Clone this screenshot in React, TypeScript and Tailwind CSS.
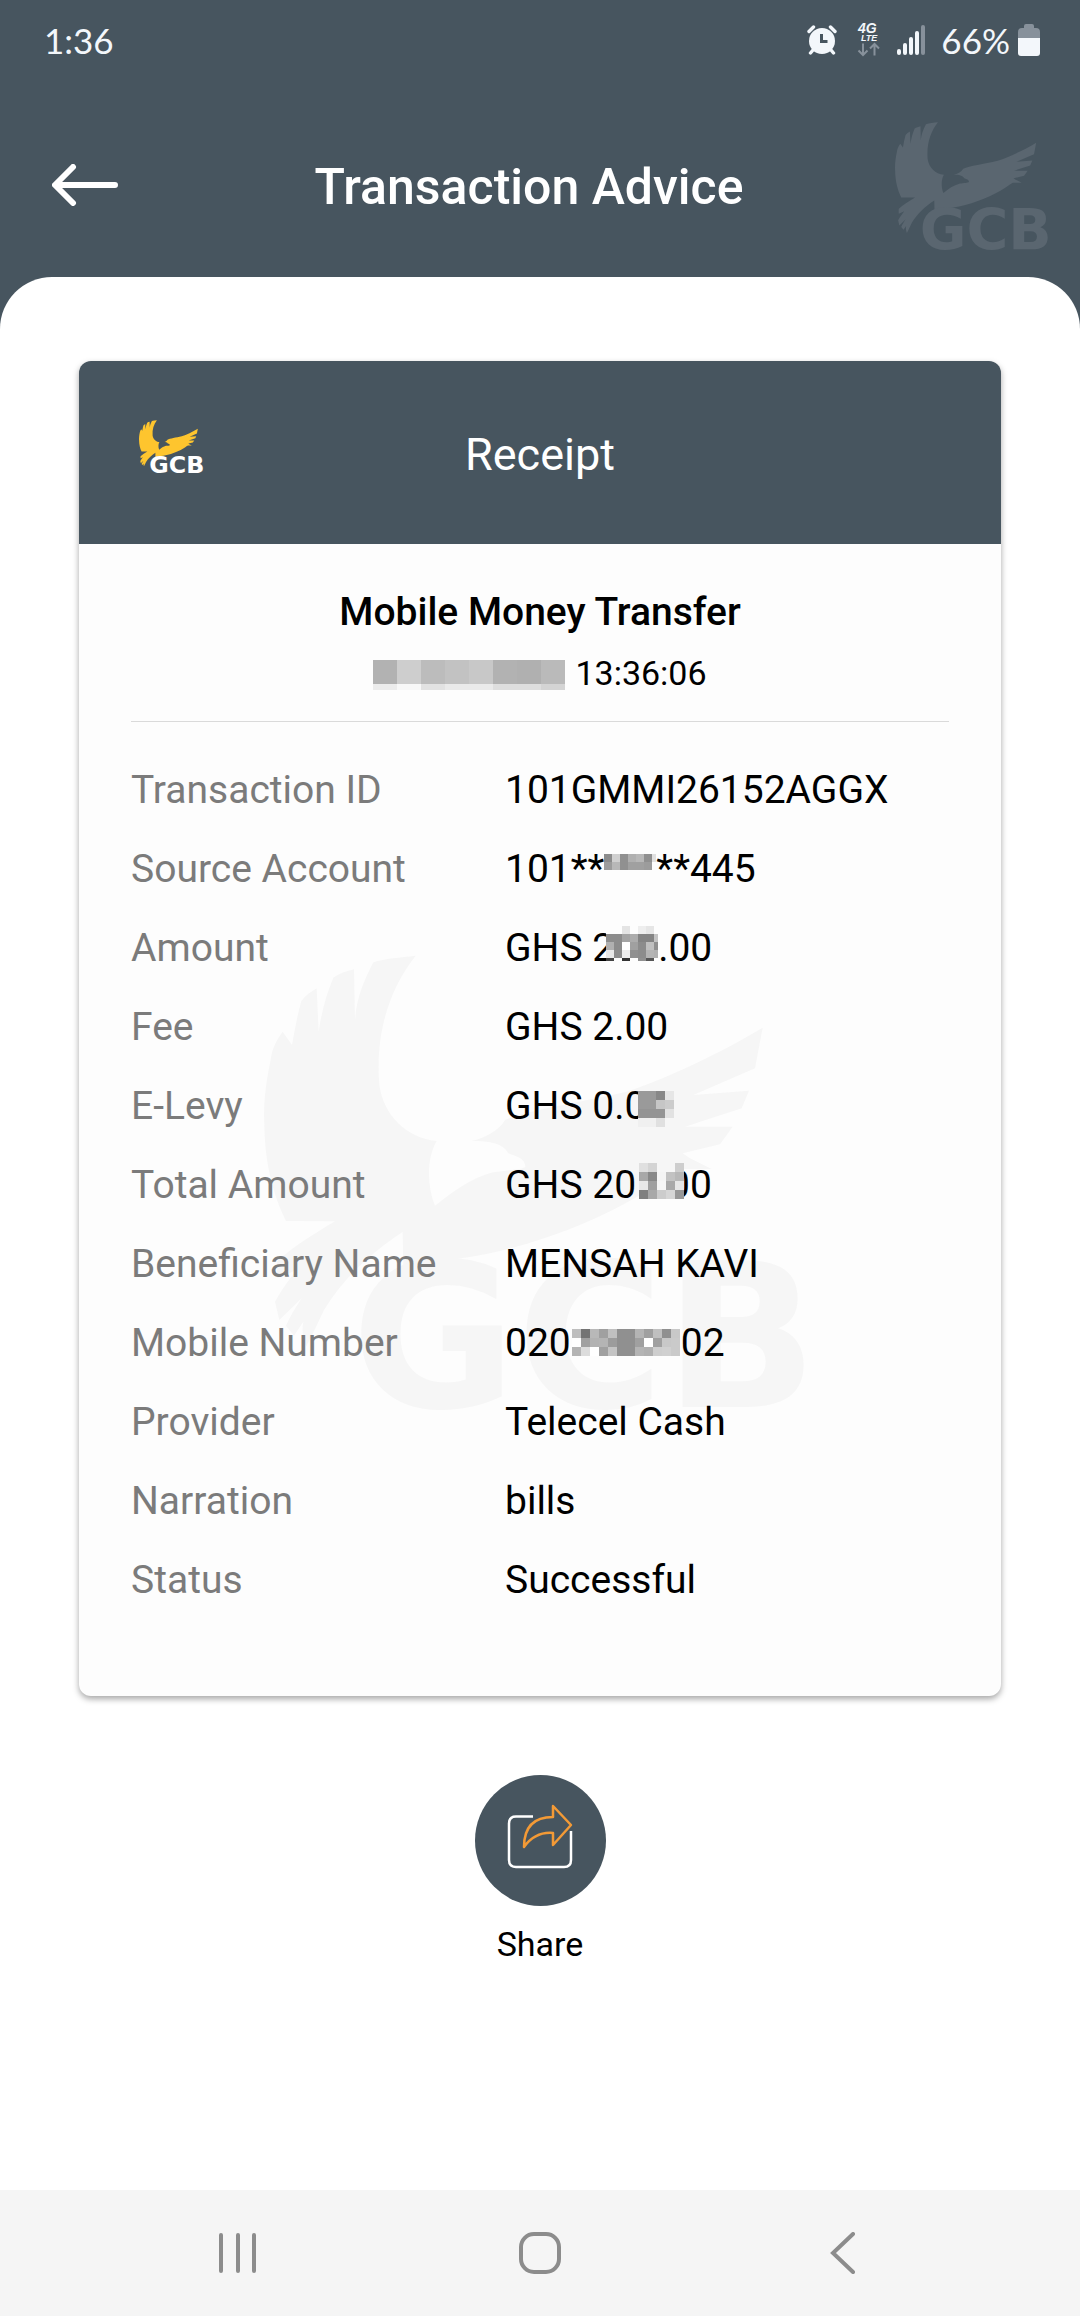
import { ReactNode } from 'react';

const DATE_MASK = [
  ['#b2b2b2', '#cecece', '#bcbcbc', '#c2c2c2', '#c8c8c8', '#b2b2b2', '#b0b0b0', '#bababa'],
  ['#ececec', '#f8f8f8', '#e2e2e2', '#eaeaea', '#eaeaea', '#dedede', '#dedede', '#d4d4d4'],
];

const ACCOUNT_MASK = [
  ['#8c8c8c', '#d0d0d0', '#909090', '#b0b0b0', '#b8b8b8', '#909090', '#e0e0e0'],
  ['#9c9c9c', '#b8b8b8', '#909090', '#a0a0a0', '#a0a0a0', '#9c9c9c', '#fdfdfd'],
];

const AMOUNT_MASK = [
  ['#fdfdfd', '#fdfdfd', '#e4e4e4', '#fdfdfd', '#eeeeee', '#e6e6e6', '#fdfdfd'],
  ['#8c8c8c', '#8c8c8c', '#a4a4a4', '#acacac', '#848484', '#848484', '#c4c4c4'],
  ['#b0b0b0', '#8c8c8c', '#ffffff', '#a0a0a0', '#8c8c8c', '#c0c0c0', '#909090'],
  ['#e8e8e8', '#8c8c8c', '#eeeeee', '#909090', '#8c8c8c', '#b4b4b4', '#b0b0b0'],
  ['#444444', '#fdfdfd', '#333333', '#fdfdfd', '#909090', '#555555', '#fdfdfd'],
];

const LEVY_MASK = [
  ['#9a9a9a', '#9a9a9a', '#888888', '#e6e6e6'],
  ['#9a9a9a', '#9a9a9a', '#c6c6c6', '#cccccc'],
  ['#949494', '#949494', '#949494', '#e2e2e2'],
  ['#f0f0f0', '#f0f0f0', '#e0e0e0', '#f6f6f6'],
];

const TOTAL_MASK = [
  ['#e0e0e0', '#d4d4d4', '#f6f6f6', '#f6f6f6', '#cecece'],
  ['#a8a8a8', '#888888', '#f4f4f4', '#c2c2c2', '#b8b8b8'],
  ['#e8e8e8', '#a0a0a0', '#f6f6f6', '#a8a8a8', '#e6e6e6'],
  ['#808080', '#a8a8a8', '#cccccc', '#d6d6d6', '#989898'],
];

const PHONE_MASK = [
  ['#bebebe', '#747474', '#b8b8b8', '#a0a0a0', '#c0c0c0', '#909090', '#909090', '#b4b4b4', '#a0a0a0', '#c0c0c0', '#909090', '#c8c8c8'],
  ['#ffffff', '#a0a0a0', '#b2b2b2', '#b4b4b4', '#9c9c9c', '#909090', '#909090', '#a0a0a0', '#ffffff', '#a0a0a0', '#c8c8c8', '#cacaca'],
  ['#b4b4b4', '#dcdcdc', '#ffffff', '#a0a0a0', '#c4c4c4', '#909090', '#909090', '#b4b4b4', '#b0b0b0', '#cecece', '#d0d0d0', '#cacaca'],
];

// The last row or column may be cut short by a height smaller than the grid
function Mosaic({ cells, size, className }: { cells: string[][]; size: number; className: string }) {
  return (
    <svg shapeRendering="crispEdges" aria-hidden="true" className={`relative inline-block overflow-hidden ${className}`}>
      {cells.map((row, y) =>
        row.map((fill, x) => (
          <rect key={`${x}-${y}`} x={x * size} y={y * size} width={size} height={size} fill={fill} />
        ))
      )}
    </svg>
  );
}

function GcbLogo({ className, bird, text }: { className: string; bird: string; text: string }) {
  return (
    <svg viewBox="42 30 1653 1365" className={`overflow-visible ${className}`} role="img" aria-label="GCB">
      <path
        className={bird}
        d="M497 32C450 38 405 40 370 52C340 110 320 160 315 225L312 73C290 78 268 85 250 98C228 150 215 200 206 260L200 130C183 140 166 152 154 168C142 210 134 255 126 300L98 260C80 285 66 310 62 345C46 420 40 480 43 540C45 660 70 750 108 828L255 829C190 868 130 905 82 948C80 965 80 980 82 1000L140 975C112 1010 92 1040 75 1070L88 1125L155 1060C135 1090 120 1115 108 1142L132 1172L160 1130C155 1155 158 1180 168 1205C190 1165 205 1130 222 1095C280 1000 360 925 458 861L460 965C560 950 650 940 720 925C900 885 1080 810 1210 725L1260 690L1290 672L1385 672L1320 640L1298 625L1410 598L1448 545L1305 545L1475 490L1497 437L1330 450L1515 370L1538 248C1400 330 1250 400 1130 440C980 475 830 495 765 525C745 560 700 580 665 588C720 588 760 595 775 625C800 635 825 640 826 665C815 675 770 675 730 682C660 700 610 740 555 782C530 720 530 640 560 588C470 580 400 510 388 420C375 260 420 130 497 32Z"
      />
      <text x="304" y="1386" fontSize="604" className={`font-['DejaVu_Sans'] font-bold ${text}`}>
        GCB
      </text>
    </svg>
  );
}

function StatusBar() {
  return (
    <div className="flex h-20 items-center justify-between pr-10 pl-11 text-[#f3f7fb]">
      <span className="font-['Lato',sans-serif] text-[35px] leading-10">1:36</span>
      <div className="flex items-center">
        {/* Alarm */}
        <svg viewBox="0 0 30 30" className="mr-5 h-[30px] w-[30px]" fill="none" aria-hidden="true">
          <circle cx="15" cy="16" r="13" fill="currentColor" />
          <path d="M2 6.500L6.500 2M28 6.500L23.500 2M6 25L3.500 28M24 25L26.500 28" stroke="currentColor" strokeWidth="3.400" strokeLinecap="round" />
          <path d="M14.500 9V16.500H20.500" stroke="#47555f" strokeWidth="3" />
        </svg>
        {/* Mobile data */}
        <svg viewBox="0 0 24 36" className="mr-4 h-9 w-6 overflow-visible" fill="none" aria-hidden="true">
          <text x="1" y="11" fontSize="14" fill="currentColor" className="font-['Liberation_Sans'] font-bold italic">4G</text>
          <text x="4" y="19" fontSize="9" fill="currentColor" className="font-['Liberation_Sans'] font-bold italic">LTE</text>
          <path d="M6 21.500V32.500M1.500 28.500L6 33L10.500 28.500M17.500 33.500V22.500M13 26.500L17.500 22L22 26.500" stroke="#87919b" strokeWidth="2" />
        </svg>
        {/* Signal */}
        <svg viewBox="0 0 28 30" className="mr-4 h-[30px] w-7" aria-hidden="true">
          <rect x="0" y="24" width="4" height="6" rx="2" fill="currentColor" />
          <rect x="6" y="18" width="4" height="12" rx="2" fill="currentColor" />
          <rect x="12" y="12" width="4" height="18" rx="2" fill="currentColor" />
          <rect x="18" y="6" width="4" height="24" rx="2" fill="currentColor" />
          <rect x="24" y="0" width="4" height="30" rx="2" fill="#87919b" />
        </svg>
        <span className="mr-2 font-['Lato',sans-serif] text-[35px] leading-10">66%</span>
        {/* Battery */}
        <svg viewBox="0 0 22 34" className="h-[34px] w-[22px]" aria-hidden="true">
          <path d="M6 5V3Q6 1 8 1H14Q16 1 16 3V5H18Q22 5 22 9V16H0V9Q0 5 4 5Z" fill="#87919b" />
          <path d="M0 15H22V30Q22 33 19 33H3Q0 33 0 30Z" fill="currentColor" />
        </svg>
      </div>
    </div>
  );
}

const details: { label: string; value: ReactNode }[] = [
  { label: 'Transaction ID', value: '101GMMI26152AGGX' },
  {
    label: 'Source Account',
    value: (
      <>
        101**
        <Mosaic cells={ACCOUNT_MASK} size={8} className="h-4 w-[52px] align-[12px]" />
        **445
      </>
    ),
  },
  {
    label: 'Amount',
    value: (
      <>
        GHS 2
        <Mosaic cells={AMOUNT_MASK} size={8} className="-ml-2 h-[35px] w-[52px] align-baseline" />
        .00
      </>
    ),
  },
  { label: 'Fee', value: 'GHS 2.00' },
  {
    label: 'E-Levy',
    value: (
      <>
        GHS 0.0
        <Mosaic cells={LEVY_MASK} size={9} className="-ml-2 h-9 w-9 align-[-8px]" />
      </>
    ),
  },
  {
    label: 'Total Amount',
    value: (
      <>
        GHS 20
        <Mosaic cells={TOTAL_MASK} size={9} className="-mr-4 ml-[3px] h-9 w-[45px] align-[-1px]" />
        00
      </>
    ),
  },
  { label: 'Beneficiary Name', value: 'MENSAH KAVI' },
  {
    label: 'Mobile Number',
    value: (
      <>
        020
        <Mosaic cells={PHONE_MASK} size={9} className="mx-px h-[27px] w-[108px] align-baseline" />
        02
      </>
    ),
  },
  { label: 'Provider', value: 'Telecel Cash' },
  { label: 'Narration', value: 'bills' },
  { label: 'Status', value: 'Successful' },
];

export default function App() {
  return (
    <div className="flex min-h-screen flex-col bg-[#47555f] font-['Roboto',sans-serif] text-black">
      <StatusBar />

      {/* Header */}
      <header className="grid h-[197px] grid-cols-[163px_1fr_185px] items-center pt-4 text-white">
        <button type="button" aria-label="Back" className="mb-1 ml-[52px] w-[68px]">
          <svg viewBox="0 0 68 42" className="h-[42px] w-[68px]" fill="none" stroke="currentColor" strokeWidth="6" strokeLinecap="round" strokeLinejoin="round">
            <path d="M21 3L3 21L21 39M4 21H63" />
          </svg>
        </button>
        <h1 className="text-center text-[50px] leading-[60px] font-medium">Transaction Advice</h1>
        <GcbLogo className="h-[129px] w-[156px]" bird="fill-[#5a6670]" text="fill-[#5a6670]" />
      </header>

      <main className="flex flex-1 flex-col items-center rounded-t-[52px] bg-white px-[79px] pt-[84px]">
        {/* Receipt card */}
        <section className="relative w-full overflow-hidden rounded-xl bg-[#fdfdfd] pb-[77px] shadow-[0_3px_6px_rgba(0,0,0,0.35)]">
          <div className="grid h-[183px] grid-cols-[1fr_auto_1fr] items-center bg-[#47555f] px-[60px] pt-1 text-white">
            <GcbLogo className="mb-4 h-[54px] w-[65px]" bird="fill-[#fec52e]" text="fill-white" />
            <h2 className="text-[45px] leading-[54px]">Receipt</h2>
          </div>

          <GcbLogo
            className="absolute top-[594px] left-[185px] w-[551px]"
            bird="fill-[#f6f6f6]"
            text="fill-[#f6f6f6]"
          />

          <div className="relative px-[52px]">
            <div className="border-b border-[#dadada] pt-[45px] pb-7 text-center">
              <h3 className="text-[39px] leading-[46px] font-medium">Mobile Money Transfer</h3>
              <p className="mt-[18px] text-[34px] leading-10">
                <Mosaic cells={DATE_MASK} size={24} className="mr-[10px] h-[30px] w-48 align-[-5px]" />
                13:36:06
              </p>
            </div>

            <dl className="pt-7">
              {details.map((item) => (
                <div key={item.label} className="flex h-[79px] items-center text-[39px] leading-[46px]">
                  <dt className="w-[374px] shrink-0 text-[#7b7b7b]">{item.label}</dt>
                  <dd className="whitespace-nowrap">{item.value}</dd>
                </div>
              ))}
            </dl>
          </div>
        </section>

        {/* Share */}
        <button type="button" className="mt-[79px] mb-10 flex flex-col items-center gap-[18px]">
          <span className="flex h-[131px] w-[131px] items-center justify-center rounded-full bg-[#47555f]">
            <svg viewBox="0 0 66 66" className="mb-2 h-[66px] w-[66px]" fill="none" strokeWidth="2.500" aria-hidden="true">
              <path d="M26 12.500H9Q2 12.500 2 19.500V56Q2 63 9 63H57Q64 63 64 56V27" stroke="#ffffff" />
              <path d="M17 43C17 22 28 13 46 13V2L64 21L46 41V29C34 28 25 32 17 43Z" stroke="#f39a36" strokeLinejoin="round" />
            </svg>
          </span>
          <span className="text-[34px] leading-10">Share</span>
        </button>
      </main>

      {/* System navigation */}
      <nav className="flex h-[126px] items-center justify-around bg-[#f5f5f5] px-[86px] text-[#8c8c8c]">
        <button type="button" aria-label="Recent apps">
          <svg viewBox="0 0 42 42" className="h-[42px] w-[42px]" stroke="currentColor" strokeWidth="4" strokeLinecap="round">
            <path d="M5 3V39M22 3V39M38 3V39" />
          </svg>
        </button>
        <button type="button" aria-label="Home">
          <svg viewBox="0 0 42 42" className="h-[42px] w-[42px]" fill="none" stroke="currentColor" strokeWidth="4">
            <rect x="2" y="2" width="38" height="38" rx="13" />
          </svg>
        </button>
        <button type="button" aria-label="Back to previous screen">
          <svg viewBox="0 0 42 42" className="h-[42px] w-[42px]" fill="none" stroke="currentColor" strokeWidth="4" strokeLinecap="round">
            <path d="M31 2L11 21L31 40" />
          </svg>
        </button>
      </nav>
    </div>
  );
}
